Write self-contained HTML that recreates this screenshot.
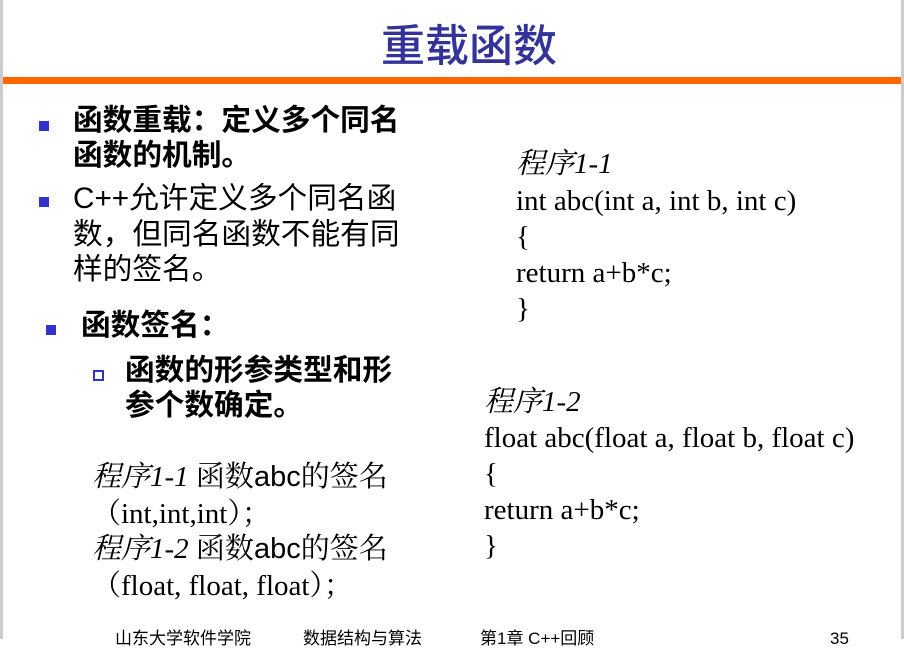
<!DOCTYPE html>
<html><head><meta charset="utf-8"><style>
html,body{margin:0;padding:0;background:#fff;}
body{width:904px;height:639px;position:relative;overflow:hidden;font-family:"Liberation Sans","Noto Sans CJK SC",sans-serif;color:#000;}
.l{position:absolute;white-space:nowrap;line-height:1;}
.cn{font-size:29.7px;}
.b{font-weight:bold;}
.s{font-family:"Liberation Serif","Noto Serif CJK SC",serif;font-size:29px;}
.i{font-style:italic;}
.sq{position:absolute;width:10px;height:10px;background:#3333cc;}
</style></head><body>
<div style="position:absolute;left:0;top:0;width:3px;height:639px;background:#ccc"></div>
<div style="position:absolute;right:0;top:0;width:3px;height:639px;background:#ccc"></div>
<div class="l" style="left:381px;top:20px;font-size:44px;color:#333399;font-family:'Noto Sans CJK SC',sans-serif;font-weight:500;">重载函数</div>
<div style="position:absolute;left:3px;top:77px;width:898px;height:7px;background:#ff6600"></div>

<div class="sq" style="left:39px;top:121px"></div>
<div class="l cn b" style="left:73px;top:106px">函数重载：定义多个同名</div>
<div class="l cn b" style="left:73px;top:141px">函数的机制。</div>
<div class="sq" style="left:39px;top:197px"></div>
<div class="l cn" style="left:73px;top:184px">C++允许定义多个同名函</div>
<div class="l cn" style="left:73px;top:220px">数，但同名函数不能有同</div>
<div class="l cn" style="left:73px;top:255px">样的签名。</div>
<div class="sq" style="left:46px;top:325px"></div>
<div class="l cn b" style="left:81px;top:311px">函数签名：</div>
<div style="position:absolute;left:93px;top:370px;width:7px;height:7px;border:2px solid #3333cc"></div>
<div class="l cn b" style="left:125px;top:356px">函数的形参类型和形</div>
<div class="l cn b" style="left:125px;top:391px">参个数确定。</div>

<div class="l s" style="left:92px;top:463px"><span class="i">程序1-1</span> 函数<span style="font-family:'Liberation Sans',sans-serif">abc</span>的签名</div>
<div class="l s" style="left:92px;top:500px">（int,int,int）；</div>
<div class="l s" style="left:92px;top:535px"><span class="i">程序1-2</span> 函数<span style="font-family:'Liberation Sans',sans-serif">abc</span>的签名</div>
<div class="l s" style="left:92px;top:572px">（float, float, float）；</div>

<div class="l s i" style="left:516px;top:150px">程序1-1</div>
<div class="l s" style="left:516px;top:187px">int abc(int a, int b, int c)</div>
<div class="l s" style="left:516px;top:223px">{</div>
<div class="l s" style="left:516px;top:259px">return a+b*c;</div>
<div class="l s" style="left:516px;top:295px">}</div>

<div class="l s i" style="left:484px;top:388px">程序1-2</div>
<div class="l s" style="left:484px;top:424px">float abc(float a, float b, float c)</div>
<div class="l s" style="left:484px;top:460px">{</div>
<div class="l s" style="left:484px;top:496px">return a+b*c;</div>
<div class="l s" style="left:484px;top:532px">}</div>

<div class="l" style="left:115px;top:630px;font-size:17px">山东大学软件学院</div>
<div class="l" style="left:303px;top:630px;font-size:17px">数据结构与算法</div>
<div class="l" style="left:480px;top:630px;font-size:17px">第1章 C++回顾</div>
<div class="l" style="left:830px;top:630px;font-size:17px">35</div>
</body></html>
